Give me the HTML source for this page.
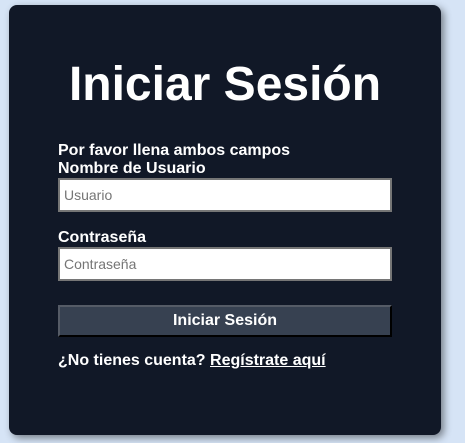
<!DOCTYPE html>
<html><head><meta charset="utf-8"><style>
html,body{margin:0;padding:0;}
body{width:465px;height:443px;background:#d6e4f6;font-family:"Liberation Sans",Arial,sans-serif;position:relative;overflow:hidden;}
.card{position:absolute;left:9px;top:5px;width:432px;height:430px;background:#111827;border-radius:8px;box-shadow:3px 3px 8px rgba(0,0,0,0.45);}
h1{position:absolute;left:0;width:432px;top:55px;margin:0;text-align:center;color:#fff;font-size:48px;font-weight:bold;line-height:50px;}
.t{position:absolute;left:49px;color:#fff;font-weight:bold;font-size:16px;line-height:18px;}
.in{position:absolute;left:49px;height:30px;background:#fff;border:2px solid #767676;box-sizing:content-box;font-size:14px;color:#757575;line-height:30px;padding-left:4px;width:326px;}
.btn{position:absolute;left:49px;top:300px;width:330px;height:28px;background:#374151;border:2px solid;border-color:#555b66 #000 #000 #555b66;color:#fff;font-weight:bold;font-size:16px;text-align:center;line-height:28px;}
a{color:#fff;text-decoration:underline;}
</style></head><body>
<div class="card">
<h1>Iniciar Sesión</h1>
<div class="t" style="top:137px">Por favor llena ambos campos</div>
<div class="t" style="top:155px">Nombre de Usuario</div>
<div class="in" style="top:173px">Usuario</div>
<div class="t" style="top:224px">Contraseña</div>
<div class="in" style="top:242px">Contraseña</div>
<div class="btn">Iniciar Sesión</div>
<div class="t" style="top:347px">¿No tienes cuenta? <a>Regístrate aquí</a></div>
</div>
</body></html>
